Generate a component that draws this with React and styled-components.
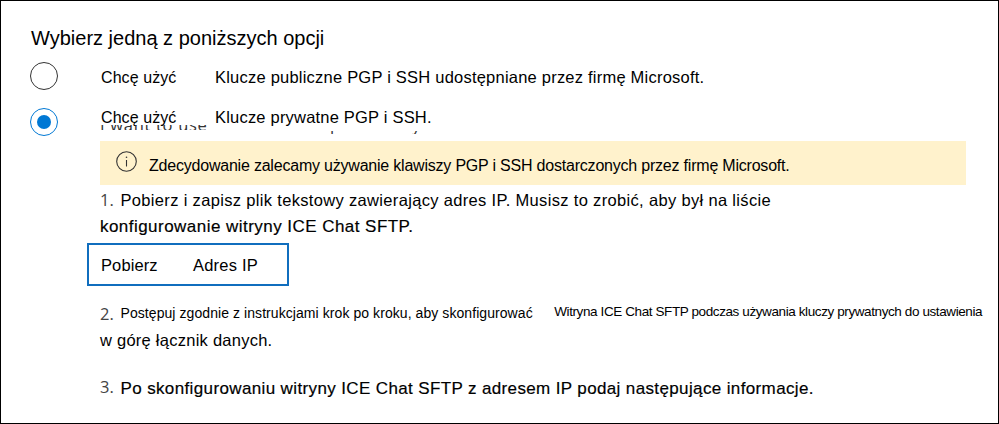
import React from 'react';
import styled, { createGlobalStyle } from 'styled-components';

const GlobalStyle = createGlobalStyle`
  * { box-sizing: border-box; }
  body { margin: 0; background: #fff; }
`;

const Panel = styled.main`
  display: flex;
  flex-direction: column;
  width: 999px;
  height: 424px;
  padding: 25px 0 0 29px;
  border: 1px solid #000;
  background: #fff;
  color: #000;
  font-family: "Liberation Sans", Arial, sans-serif;
  overflow: hidden;
`;

const Title = styled.h1`
  margin: 0 0 0 1px;
  font-size: 20px;
  font-weight: 400;
  line-height: 24px;
`;

const Text = styled.span`
  font-size: ${p => p.$size || 16}px;
  line-height: 20px;
  letter-spacing: ${p => p.$track || 0}px;
  white-space: nowrap;
  -webkit-text-stroke: ${p => (p.$strong ? '0.18px #000' : '0')};
`;

const WideText = styled(Text)`
  font-size: 16.5px;
  line-height: 18px;
`;

const Option = styled.label`
  position: relative;
  display: grid;
  grid-template-columns: 71px 114px 1fr;
  height: 28px;
  margin-top: ${p => p.$gap}px;
  padding-top: ${p => p.$drop || 0}px;
`;

const Radio = styled.span`
  display: flex;
  align-items: center;
  justify-content: center;
  width: 28px;
  height: 28px;
  margin-top: ${p => -(p.$drop || 0)}px;
  border: 1px solid ${p => (p.$checked ? '#0078d4' : '#333')};
  border-radius: 50%;
  &::after {
    content: "";
    width: 14px;
    height: 14px;
    border-radius: 50%;
    background: ${p => (p.$checked ? '#0078d4' : 'transparent')};
  }
`;

/* Line of text partly hidden behind the option's label */
const Clipped = styled.span`
  position: absolute;
  left: ${p => p.$x}px;
  top: ${p => p.$y}px;
  display: flex;
  align-items: flex-end;
  height: ${p => p.$h}px;
  overflow: hidden;
  color: #333;
  font: 16.5px/20px "Open Sans", sans-serif;
  letter-spacing: 0.7px;
  white-space: nowrap;
`;

const Shift = styled.span`
  margin-bottom: ${p => p.$by}px;
`;

const Details = styled.section`
  display: flex;
  flex-direction: column;
  align-items: flex-start;
  margin-left: 70px;
`;

const Notice = styled.div`
  display: flex;
  width: 866px;
  height: 44px;
  margin-top: 5px;
  padding: 10px 0 0 16px;
  background: #fff2cc;
`;

const NoticeText = styled(Text)`
  margin: 5px 0 0 11px;
`;

const Step = styled.div`
  display: flex;
  height: 20px;
  margin-top: ${p => p.$gap}px;
`;

const StepNumber = styled.span`
  width: 20.5px;
  margin-top: ${p => p.$shift || 0}px;
  color: #444;
  font: 16.5px/20px "Open Sans", sans-serif;
`;

const StepLink = styled(Text)`
  margin: -1px 0 0 21.5px;
`;

const Continuation = styled.div`
  display: flex;
  height: 20px;
  margin-top: ${p => p.$gap}px;
`;

const DownloadButton = styled.button`
  display: grid;
  grid-template-columns: 92px auto;
  align-content: start;
  justify-content: start;
  width: 202px;
  height: 43px;
  margin: 6px 0 0 -13px;
  padding: 11px 0 0 12px;
  border: 2px solid #106ebe;
  background: #fff;
  color: #000;
  font-family: inherit;
  text-align: left;
`;

const InfoIcon = () => (
  <svg width="22" height="22" viewBox="0 0 22 22" fill="none">
    <circle cx="10.5" cy="10.5" r="9.8" stroke="#333" strokeWidth="1.1" />
    <path d="M10.5 9v6.5" stroke="#333" strokeWidth="1.1" />
    <circle cx="10.5" cy="6.2" r="0.8" fill="#333" />
  </svg>
);

export default function App() {
  return (
    <>
      <GlobalStyle />
      <Panel>
        <Title>Wybierz jedną z poniższych opcji</Title>

        <Option $gap={12} $drop={6}>
          <Radio $drop={6} />
          <Text $track={0.08}>Chcę użyć</Text>
          <WideText $track={0.22}>Klucze publiczne PGP i SSH udostępniane przez firmę Microsoft.</WideText>
        </Option>

        <Option $gap={18}>
          <Radio $checked />
          <Text $track={0.08}>Chcę użyć</Text>
          <WideText $track={0.2}>Klucze prywatne PGP i SSH.</WideText>
          <Clipped $x={70} $y={17} $h={5}><Shift $by={-5}>I want to use</Shift></Clipped>
          <Clipped $x={300} $y={23} $h={3}><Shift $by={-1}>p</Shift></Clipped>
          <Clipped $x={382} $y={23} $h={3}><Shift $by={-1}>y</Shift></Clipped>
        </Option>

        <Details>
          <Notice>
            <InfoIcon />
            <NoticeText $track={-0.21}>
              Zdecydowanie zalecamy używanie klawiszy PGP i SSH dostarczonych przez firmę Microsoft.
            </NoticeText>
          </Notice>

          <Step $gap={6}>
            <StepNumber $shift={-1}>1.</StepNumber>
            <WideText $track={0.33}>
              Pobierz i zapisz plik tekstowy zawierający adres IP. Musisz to zrobić, aby był na liście
            </WideText>
          </Step>
          <Continuation $gap={6}>
            <Text $size={17} $track={0.46} $strong>konfigurowanie witryny ICE Chat SFTP.</Text>
          </Continuation>

          <DownloadButton>
            <WideText $track={0.1}>Pobierz</WideText>
            <WideText $track={0.2}>Adres IP</WideText>
          </DownloadButton>

          <Step $gap={17}>
            <StepNumber $shift={1}>2.</StepNumber>
            <Text $size={14} $track={0.07}>
              Postępuj zgodnie z instrukcjami krok po kroku, aby skonfigurować
            </Text>
            <StepLink $size={13.5} $track={-0.4}>
              Witryna ICE Chat SFTP podczas używania kluczy prywatnych do ustawienia
            </StepLink>
          </Step>
          <Continuation $gap={8}>
            <WideText $track={0.25}>w górę łącznik danych.</WideText>
          </Continuation>

          <Step $gap={28}>
            <StepNumber $shift={-2}>3.</StepNumber>
            <Text $size={17} $track={0.37} $strong>
              Po skonfigurowaniu witryny ICE Chat SFTP z adresem IP podaj następujące informacje.
            </Text>
          </Step>
        </Details>
      </Panel>
    </>
  );
}
